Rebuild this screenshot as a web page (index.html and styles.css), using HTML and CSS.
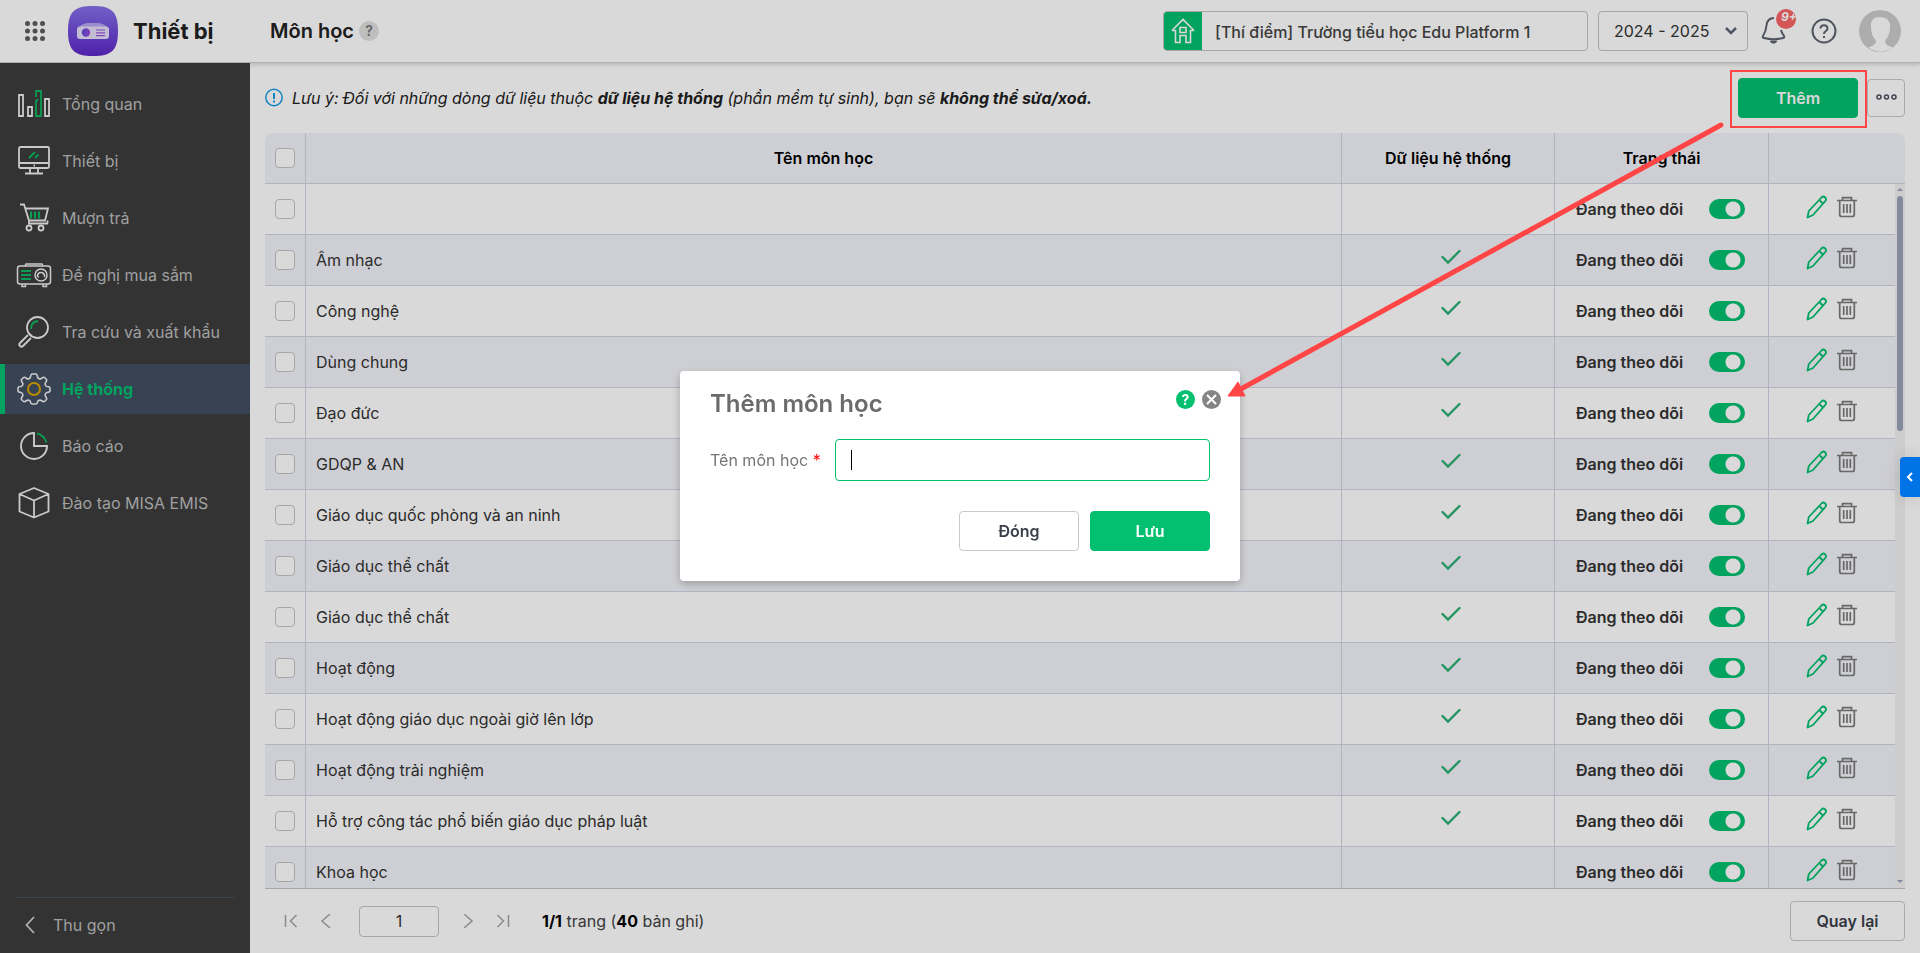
FILE: index.html
```html
<!DOCTYPE html>
<html lang="vi">
<head>
    <meta charset="utf-8">
    <title>Môn học</title>
    <link rel="stylesheet" href="styles.css">
</head>
<body>

<!-- shared icons -->
<svg class="sprite" aria-hidden="true">
    <symbol id="i-check" viewBox="0 0 20 16"><path d="M1.500 8l5.500 5.500L18.500 2" fill="none" stroke="#2bb074" stroke-width="2.400" stroke-linecap="round"/></symbol>
    <symbol id="i-edit" viewBox="0 0 22 24"><path d="M1.500 22.500l1.300-6.500L15.500 2.500c1.200-1.200 2.700-1 3.700 0s1 2.500 0 3.700L7 20z M13.300 5l3.500 3.500" fill="none" stroke="#03bf70" stroke-width="1.800" stroke-linejoin="round"/></symbol>
    <symbol id="i-trash" viewBox="0 0 20 22"><path d="M0 4.500h20M5.500 4V1.700h9V4M2.700 4.500v14c0 1.200.8 2 2 2h10.600c1.200 0 2-.8 2-2v-14M6.700 8v9M10 8v9M13.300 8v9" fill="none" stroke="#7b7b7b" stroke-width="1.700"/></symbol>
</svg>

<header class="topbar">
    <button class="icon-btn" aria-label="Ứng dụng">
        <svg width="20" height="20" viewBox="0 0 20 20" fill="#5f5f5f"><circle cx="2.500" cy="2.500" r="2.500"/><circle cx="10" cy="2.500" r="2.500"/><circle cx="17.500" cy="2.500" r="2.500"/><circle cx="2.500" cy="10" r="2.500"/><circle cx="10" cy="10" r="2.500"/><circle cx="17.500" cy="10" r="2.500"/><circle cx="2.500" cy="17.500" r="2.500"/><circle cx="10" cy="17.500" r="2.500"/><circle cx="17.500" cy="17.500" r="2.500"/></svg>
    </button>
    <svg class="logo" width="50" height="50" viewBox="0 0 50 50">
        <defs>
            <linearGradient id="lg" x1="0" y1="0" x2="0" y2="1"><stop offset="0" stop-color="#8672ea"/><stop offset="1" stop-color="#5d27c8"/></linearGradient>
            <linearGradient id="lens" x1="0" y1="0" x2="1" y2="0"><stop offset="0" stop-color="#5a48e0"/><stop offset="1" stop-color="#a44be0"/></linearGradient>
        </defs>
        <path d="M25 0C43 0 50 5 50 25S43 50 25 50 0 45 0 25 7 0 25 0z" fill="url(#lg)"/>
        <path d="M11 21c3-3 6-4 9-4h10c3 0 6 1 9 4z" fill="#b4a6f0"/>
        <rect x="9" y="20.500" width="32" height="12.500" rx="3" fill="#e6defa"/>
        <circle cx="18" cy="26.500" r="4.200" fill="url(#lens)"/>
        <path d="M28 24h9M28 26.800h9M28 29.600h9" stroke="#9a55dd" stroke-width="1.200"/>
    </svg>
    <span class="app-name">Thiết bị</span>
    <h1 class="page-title">Môn học</h1>
    <button class="hint" aria-label="Trợ giúp">?</button>
    <div class="topbar-right">
        <div class="school">
            <span class="school-icon">
                <svg width="26" height="26" viewBox="0 0 26 26" fill="none" stroke="#fff" stroke-width="1.600"><path d="M2 12.500L13 1.500l11 11M2 12.500h3.500V24.500H10v-7h6v7h4.500v-12H24M10 9.500h6v5h-6z"/></svg>
            </span>
            <span class="school-name">[Thí điểm] Trường tiểu học Edu Platform 1</span>
        </div>
        <select class="year" aria-label="Năm học"><option>2024 - 2025</option></select>
        <button class="icon-btn bell" aria-label="Thông báo">
            <svg width="26" height="28" viewBox="0 0 26 28" fill="none" stroke="#5e6470" stroke-width="2" stroke-linejoin="round"><path d="M13 2c-5 0-7 3-7.500 7.500C5 15 4 17 2 20c-.6 1.200 0 1.800 1 2 6 1.500 13 1.500 19 0 1-.2 1.600-.8 1-2-1.500-2-2.500-3.500-3-6"/><path d="M10 25.500h5l-1.500 1h-2z" fill="#5e6470"/></svg>
            <span class="badge">9+</span>
        </button>
        <button class="icon-btn" aria-label="Hỗ trợ">
            <svg width="26" height="26" viewBox="0 0 26 26" fill="none" stroke="#5e6470" stroke-width="2"><circle cx="13" cy="13" r="11.500"/><path d="M9.500 10.500c0-4.500 7-4.500 7 0 0 2.500-3.500 2.500-3.500 5.500M13 18v2"/></svg>
        </button>
        <svg class="avatar" width="42" height="42" viewBox="0 0 42 42"><circle cx="21" cy="21" r="21" fill="#ccc"/><path d="M21 7c-7 0-9.500 4-9 10 .2 6 1.500 10 4.500 13 1 3-.5 5.500-7 7.500 7 5.500 17 5.500 24 0-6.500-2-8-4.500-7-7.500 3-3 4.300-7 4.500-13C31.500 11 28 7 21 7z" fill="#fff"/></svg>
    </div>
</header>

<div class="layout">
    <nav class="sidebar">
        <a class="nav-item" href="#">
            <svg width="36" height="36" viewBox="0 0 36 36" fill="none" stroke="#eee" stroke-width="1.800"><path d="M3 9h4v21H3zM12 21h4v9h-4zM29 13h4v17h-4z"/><path d="M20 11V5h5v25h-5V15l2-2" stroke="#0db561"/></svg>
            Tổng quan</a>
        <a class="nav-item" href="#">
            <svg width="36" height="36" viewBox="0 0 36 36" fill="none" stroke="#eee" stroke-width="1.800"><rect x="3" y="4" width="30" height="21" rx="1.500"/><path d="M3 20h30M14 25v5M22 25v5M9 30.500h18M17.500 22.500h1.500"/><path d="M13 15l6-6M19 15l3.500-3.500" stroke="#0db561" stroke-width="2"/></svg>
            Thiết bị</a>
        <a class="nav-item" href="#">
            <svg width="36" height="36" viewBox="0 0 36 36" fill="none" stroke="#eee" stroke-width="1.800"><path d="M4 4.500h4l5 16h16l3-12H9.500M13 20.500v3h19M31.500 20.500v3"/><circle cx="13" cy="28" r="2.500"/><circle cx="25" cy="28" r="2.500"/><path d="M15 11.500v7M19 11.500v7M23 11.500v7" stroke="#0db561" stroke-width="2.200"/></svg>
            Mượn trả</a>
        <a class="nav-item" href="#">
            <svg width="36" height="36" viewBox="0 0 36 36" fill="none" stroke="#eee" stroke-width="1.500"><rect x="1.500" y="9" width="33" height="18" rx="2.500"/><path d="M9 9l1-2h16l1 2M6 27v2.500h3.500V27M27 27v2.500h3.500V27"/><circle cx="25" cy="18" r="6"/><path d="M21.500 20c-1-6 8-6 7 0M22 20h1"/><path d="M5 14h10M5 18h10M5 22h10" stroke="#0db561" stroke-width="1.800"/></svg>
            Đề nghị mua sắm</a>
        <a class="nav-item" href="#">
            <svg width="36" height="36" viewBox="0 0 36 36" fill="none" stroke="#eee" stroke-width="1.800"><circle cx="21.500" cy="13.500" r="10.500"/><path d="M12 21l-8 8c-2 2 1 5 3 3l8-8M13.500 20l2 2"/><path d="M15 15c0-5 2-7.500 7-8" stroke="#0db561"/></svg>
            Tra cứu và xuất khẩu</a>
        <a class="nav-item active" href="#">
            <svg width="36" height="36" viewBox="0 0 36 36" fill="none" stroke="#eee" stroke-width="1.600" stroke-linejoin="round"><path d="M14.500 6c.3-2 .8-3 1.500-3h4c.7 0 1.200 1 1.500 3 .3 1.500 2.500 2.400 3.800 1.500 1.600-1.200 2.600-1.500 3.200-1l2 2c.5.600.2 1.600-1 3.200-.9 1.300 0 3.500 1.500 3.800 2 .3 3 .8 3 1.500v3c0 .7-1 1.200-3 1.500-1.500.3-2.400 2.500-1.500 3.800 1.200 1.600 1.500 2.600 1 3.200l-2 2c-.6.500-1.600.2-3.200-1-1.300-.9-3.500 0-3.800 1.500-.3 2-.8 2-1.500 2h-4c-.7 0-1.200 0-1.500-2-.3-1.500-2.500-2.400-3.800-1.500-1.600 1.200-2.600 1.500-3.200 1l-2-2c-.5-.6-.2-1.600 1-3.200.9-1.300 0-3.500-1.500-3.800-2-.3-3-.8-3-1.500v-3c0-.7 1-1.200 3-1.500 1.500-.3 2.400-2.500 1.500-3.800-1.200-1.600-1.500-2.600-1-3.200l2-2c.6-.5 1.600-.2 3.200 1C12 8.400 14.200 7.500 14.500 6z"/><circle cx="18" cy="18" r="6" stroke="#dba400" stroke-width="2"/></svg>
            Hệ thống</a>
        <a class="nav-item" href="#">
            <svg width="36" height="36" viewBox="0 0 36 36" fill="none" stroke="#eee" stroke-width="1.900"><path d="M18 5a13 13 0 1 0 13 13H18z"/><path d="M21 5.500c5 1 8 4.500 9.500 9" stroke="#0db561"/></svg>
            Báo cáo</a>
        <a class="nav-item" href="#">
            <svg width="36" height="36" viewBox="0 0 36 36" fill="none" stroke="#eee" stroke-width="1.800" stroke-linejoin="round"><path d="M18 3l14.500 6v17.500L18 32.500l-14.500-6V9zM3.500 9L18 15.500 32.500 9M18 15.500v17"/></svg>
            Đào tạo MISA EMIS</a>
        <button class="collapse">
            <svg width="10" height="18" viewBox="0 0 10 18" fill="none" stroke="#d0d0d0" stroke-width="1.800"><path d="M9 1L1.500 9 9 17"/></svg>
            Thu gọn</button>
    </nav>

    <main class="content">
        <div class="toolbar">
            <svg width="18" height="19" viewBox="0 0 18 19" fill="none" stroke="#1a9be6" stroke-width="1.500"><circle cx="9" cy="9.500" r="8.200"/><path d="M9 5v6M9 12.500v2" stroke-width="2"/></svg>
            <p class="note">Lưu ý: Đối với những dòng dữ liệu thuộc <b>dữ liệu hệ thống</b> (phần mềm tự sinh), bạn sẽ <b>không thể sửa/xoá.</b></p>
            <button class="btn primary">Thêm</button>
            <button class="more" aria-label="Thêm tùy chọn">
                <svg width="21" height="6" viewBox="0 0 21 6" fill="none" stroke="#4a4f5e" stroke-width="1.500"><circle cx="3" cy="3" r="2"/><circle cx="10.500" cy="3" r="2"/><circle cx="18" cy="3" r="2"/></svg>
            </button>
        </div>

        <div class="grid">
            <table>
                <colgroup><col class="c-check"><col><col class="c-system"><col class="c-status"><col class="c-actions"></colgroup>
                <thead>
                    <tr>
                        <th class="check"><input type="checkbox" aria-label="Chọn tất cả"></th>
                        <th>Tên môn học</th>
                        <th>Dữ liệu hệ thống</th>
                        <th>Trạng thái</th>
                        <th></th>
                    </tr>
                </thead>
                <tbody id="rows"></tbody>
            </table>
            <div class="scrollbar"><i class="up"></i><i class="thumb"></i><i class="down"></i></div>
        </div>

        <footer class="pager">
            <button class="icon-btn" aria-label="Trang đầu"><svg width="14" height="14" viewBox="0 0 14 14"><path d="M1.500 1v12M12.500 1l-6 6 6 6"/></svg></button>
            <button class="icon-btn" aria-label="Trang trước"><svg width="14" height="14" viewBox="0 0 14 14"><path d="M11 0L3 7l8 7"/></svg></button>
            <input class="page-no" type="text" value="1" aria-label="Trang">
            <button class="icon-btn" aria-label="Trang sau"><svg width="14" height="14" viewBox="0 0 14 14"><path d="M3 0l8 7-8 7"/></svg></button>
            <button class="icon-btn" aria-label="Trang cuối"><svg width="14" height="14" viewBox="0 0 14 14"><path d="M12.500 1v12M1.500 1l6 6-6 6"/></svg></button>
            <span class="total"><b>1/1</b> trang (<b>40</b> bản ghi)</span>
            <button class="btn back">Quay lại</button>
        </footer>
    </main>
</div>

<button class="side-tab" aria-label="Mở rộng"><svg width="8" height="10" viewBox="0 0 8 10" fill="none" stroke="#fff" stroke-width="2"><path d="M6 1L2 5l4 4"/></svg></button>

<div class="backdrop">
    <form class="modal" role="dialog" aria-labelledby="modalTitle">
        <div class="modal-head">
            <h2 id="modalTitle">Thêm môn học</h2>
            <button type="button" class="round help" aria-label="Trợ giúp">?</button>
            <button type="button" class="round close" aria-label="Đóng"><svg width="11" height="11" viewBox="0 0 11 11" stroke="#fff" stroke-width="2"><path d="M1 1l9 9M10 1l-9 9"/></svg></button>
        </div>
        <div class="field">
            <label for="subject">Tên môn học <span class="required">*</span></label>
            <div class="field-box">
                <input id="subject" type="text">
                <span class="caret"></span>
            </div>
        </div>
        <div class="modal-foot">
            <button type="button" class="btn">Đóng</button>
            <button type="button" class="btn primary">Lưu</button>
        </div>
    </form>
</div>

<div class="callout"></div>
<svg class="arrow" width="500" height="280" viewBox="0 0 500 280"><path d="M496 5L14 270" stroke="#ff4545" stroke-width="5" stroke-linecap="round"/><path d="M3 276l10-14 7 14z" fill="#ff4545" stroke="#ff4545"/></svg>

<script>
    var subjects = [
        ['', false],
        ['Âm nhạc', true],
        ['Công nghệ', true],
        ['Dùng chung', true],
        ['Đạo đức', true],
        ['GDQP & AN', true],
        ['Giáo dục quốc phòng và an ninh', true],
        ['Giáo dục thể chất', true],
        ['Giáo dục thể chất', true],
        ['Hoạt động', true],
        ['Hoạt động giáo dục ngoài giờ lên lớp', true],
        ['Hoạt động trải nghiệm', true],
        ['Hỗ trợ công tác phổ biến giáo dục pháp luật', true],
        ['Khoa học', false]
    ];

    document.getElementById('rows').innerHTML = subjects.map(function (s, i) {
        return '<tr>' +
            '<td class="check"><input type="checkbox" aria-label="Chọn dòng ' + (i + 1) + '"></td>' +
            '<td class="name">' + s[0].replace('&', '&amp;') + '</td>' +
            '<td class="system">' + (s[1] ? '<svg width="20" height="16"><use href="#i-check"/></svg>' : '') + '</td>' +
            '<td><label class="status">Đang theo dõi <input type="checkbox" class="switch" checked></label></td>' +
            '<td><div class="actions">' +
            '<button class="icon-btn" aria-label="Sửa"><svg width="22" height="24"><use href="#i-edit"/></svg></button>' +
            '<button class="icon-btn" aria-label="Xóa"><svg width="20" height="22"><use href="#i-trash"/></svg></button>' +
            '</div></td></tr>';
    }).join('');
</script>

</body>
</html>
```

FILE: styles.css
```css
* {
    box-sizing: border-box;
}

body {
    margin: 0;
    height: 100vh;
    display: flex;
    flex-direction: column;
    overflow: hidden;
    font-family: Inter, "Liberation Sans", sans-serif;
    font-size: 16px;
    color: #333;
    background-color: #fff;
}

button, input, select {
    font: inherit;
    color: inherit;
}

button {
    cursor: pointer;
}

.sprite {
    display: none;
}

.icon-btn {
    display: flex;
    padding: 0;
    border: none;
    background: none;
}

/* top bar */
.topbar {
    display: flex;
    align-items: center;
    height: 63px;
    padding: 0 19px 0 25px;
    border-bottom: 1px solid #d0d0d4;
    box-shadow: 0 1px 5px rgba(0, 0, 0, 0.2);
    color: #212121;
}

.logo {
    margin-left: 23px;
}

.app-name {
    width: 137px;
    margin-left: 15px;
    font-size: 22px;
    font-weight: 700;
}

.page-title {
    margin: 0;
    font-size: 20px;
    font-weight: 600;
}

.hint {
    width: 20px;
    height: 20px;
    margin-left: 5px;
    padding: 0;
    border: none;
    border-radius: 50%;
    background-color: #e0e0e0;
    color: #757575;
    font-size: 14px;
    font-weight: 600;
    line-height: 20px;
}

.topbar-right {
    display: flex;
    align-items: center;
    margin-left: auto;
}

.school {
    display: flex;
    width: 425px;
    height: 40px;
    border: 1px solid #c4c4c4;
    border-radius: 4px;
    overflow: hidden;
}

.school-icon {
    display: flex;
    align-items: center;
    justify-content: center;
    width: 38px;
    background-color: #03bf70;
}

.school-name {
    padding-left: 13px;
    font-weight: 500;
    line-height: 40px;
    color: #444;
}

.year {
    width: 150px;
    height: 40px;
    margin: 0 13px 0 10px;
    padding: 0 15px;
    border: 1px solid #c4c4c4;
    border-radius: 4px;
    appearance: none;
    color: #333;
    background: url("data:image/svg+xml,%3Csvg xmlns='http://www.w3.org/2000/svg' width='14' height='10' fill='none' stroke='%235e6478' stroke-width='2.500'%3E%3Cpath d='M2 2l5 5 5-5'/%3E%3C/svg%3E") no-repeat right 9px center;
}

.bell {
    position: relative;
    margin-right: 24px;
    padding-bottom: 3px;
}

.badge {
    position: absolute;
    top: -7px;
    left: 15px;
    width: 20px;
    height: 20px;
    padding-left: 5px;
    border-radius: 50%;
    overflow: hidden;
    background-color: #f86464;
    color: #fff;
    font-size: 12px;
    font-style: italic;
    font-weight: 700;
    line-height: 16px;
    text-align: left;
}

.avatar {
    margin-left: 22px;
}

.layout {
    display: flex;
    flex: 1;
    min-height: 0;
}

/* sidebar */
.sidebar {
    display: flex;
    flex-direction: column;
    gap: 7px;
    width: 250px;
    padding-top: 16px;
    background-color: #3c3c3c;
    z-index: 1;
}

.nav-item {
    display: flex;
    align-items: center;
    gap: 10px;
    height: 50px;
    padding-left: 16px;
    color: #bdbdbd;
    text-decoration: none;
}

.nav-item.active {
    padding-left: 11px;
    border-left: 5px solid #03bf70;
    background-color: #414e61;
    color: #03bf70;
    font-weight: 700;
}

.collapse {
    display: flex;
    align-items: center;
    gap: 18px;
    height: 56px;
    margin: auto 15px 0;
    padding: 0 0 2px 10px;
    border: none;
    border-top: 1px solid #45525c;
    background: none;
    color: #bdbdbd;
}

/* content */
.content {
    display: flex;
    flex-direction: column;
    flex: 1;
    min-width: 0;
    padding: 0 15px;
}

.toolbar {
    display: flex;
    align-items: center;
    height: 70px;
    padding-bottom: 1px;
}

.note {
    flex: 1;
    margin: 0 0 0 9px;
    font-style: italic;
    color: #212121;
}

.btn {
    width: 120px;
    height: 40px;
    padding: 0;
    border: 1px solid #c9c9c9;
    border-radius: 4px;
    background-color: #fff;
    font-weight: 600;
    color: #3b3f4c;
}

.btn.primary {
    border-color: #03bf70;
    background-color: #03bf70;
    color: #fff;
}

.more {
    display: flex;
    justify-content: center;
    width: 38px;
    height: 38px;
    margin-left: 9px;
    padding: 14px 0 0;
    border: 1px solid #c9c9c9;
    border-radius: 4px;
    background-color: #fff;
}

.grid {
    position: relative;
    flex: 1;
    min-height: 0;
    overflow: hidden;
    border-bottom: 1px solid #c4c4c4;
    border-radius: 8px 8px 0 0;
}

table {
    width: 100%;
    table-layout: fixed;
    border-collapse: separate;
    border-spacing: 0;
}

.c-check { width: 41px; }
.c-system { width: 213px; }
.c-status { width: 214px; }
.c-actions { width: 136px; }

th, td {
    height: 51px;
    padding: 0;
    border-right: 1px solid #d3d4e4;
    border-bottom: 1px solid #d3d4e4;
}

th:last-child, td:last-child {
    border-right: none;
}

th {
    background-color: #f3f4f9;
    font-weight: 600;
    color: #000;
}

tbody tr:nth-child(even) {
    background-color: #f3f4f9;
}

.check {
    padding-bottom: 1px;
    text-align: center;
}

.name {
    padding-left: 10px;
}

.system {
    padding: 0 0 2px 6px;
    text-align: center;
}

input[type="checkbox"] {
    display: block;
    width: 20px;
    height: 20px;
    margin: 0 auto;
    border: 1px solid #c4c4c4;
    border-radius: 4px;
    background-color: #fff;
    appearance: none;
}

.status {
    display: flex;
    align-items: center;
    justify-content: space-between;
    padding: 0 23px 0 21px;
    font-weight: 600;
}

.status .switch {
    width: 36px;
    height: 20px;
    margin: 0;
    border: none;
    border-radius: 10px;
    background: radial-gradient(circle at 24px 10px, #fff 7px, #03bf70 8px);
}

.actions {
    display: flex;
    align-items: center;
    justify-content: center;
    gap: 9px;
    padding: 0 12px 4px 0;
}

.scrollbar {
    position: absolute;
    top: 51px;
    right: 0;
    bottom: 0;
    display: flex;
    flex-direction: column;
    align-items: center;
    width: 10px;
    background-color: #f1f1f1;
}

.up, .down {
    border: 3px solid transparent;
}

.up {
    margin: 1px 0 5px;
    border-bottom-color: #9aa3b8;
}

.down {
    margin: auto 0 2px;
    border-top-color: #9aa3b8;
}

.thumb {
    width: 6px;
    height: 235px;
    border-radius: 3px;
    background-color: #9aa3b8;
}

/* paging */
.pager {
    display: flex;
    align-items: center;
    height: 64px;
    padding-left: 19px;
}

.pager svg {
    fill: none;
    stroke: #a4a4a8;
    stroke-width: 1.5;
}

.pager .icon-btn + .icon-btn {
    margin-left: 21px;
}

.page-no {
    width: 80px;
    height: 31px;
    margin: 0 22px 0 26px;
    border: 1px solid #c4c4c4;
    border-radius: 4px;
    text-align: center;
}

.total {
    margin-left: 32px;
    color: #424242;
}

.total b {
    color: #000;
}

.back {
    width: 115px;
    margin-left: auto;
}

.side-tab {
    position: fixed;
    top: 457px;
    right: 0;
    z-index: 3;
    display: flex;
    align-items: center;
    justify-content: center;
    width: 20px;
    height: 40px;
    padding: 0;
    border: none;
    border-radius: 4px 0 0 4px;
    background-color: #0073e6;
    box-shadow: 0 0 20px rgba(0, 0, 0, 0.15);
}

/* dialog */
.backdrop {
    position: fixed;
    inset: 0;
    z-index: 2;
    display: flex;
    align-items: center;
    justify-content: center;
    padding-bottom: 1px;
    background-color: rgba(0, 0, 0, 0.15);
}

.modal {
    width: 560px;
    padding: 18px 30px 30px;
    border-radius: 4px;
    background-color: #fff;
    box-shadow: 0 3px 8px rgba(0, 0, 0, 0.25);
}

.modal-head {
    display: flex;
    height: 50px;
    margin-right: -11px;
}

.modal-head h2 {
    flex: 1;
    margin: 0;
    font-size: 24px;
    font-weight: 600;
    line-height: 30px;
    color: #6b6b6b;
}

.round {
    display: flex;
    align-items: center;
    justify-content: center;
    width: 19px;
    height: 19px;
    margin: 1px 0 0 7px;
    padding: 0;
    border: none;
    border-radius: 50%;
    color: #fff;
    font-size: 14px;
    font-weight: 700;
}

.help { background-color: #03bf70; }
.close { background-color: #858585; }

.field {
    display: flex;
    align-items: center;
}

.field label {
    width: 125px;
    color: #757575;
}

.required {
    color: #f00;
}

.field-box {
    position: relative;
    flex: 1;
}

.field-box input {
    display: block;
    width: 100%;
    height: 42px;
    padding: 0 15px;
    border: 1px solid #03bf70;
    border-radius: 4px;
    outline: none;
}

.caret {
    position: absolute;
    top: 11px;
    left: 16px;
    width: 1px;
    height: 20px;
    background-color: #000;
}

.modal-foot {
    display: flex;
    justify-content: flex-end;
    gap: 11px;
    margin-top: 30px;
}

/* highlight on the add button */
.callout {
    position: fixed;
    top: 70px;
    right: 53px;
    z-index: 4;
    width: 137px;
    height: 58px;
    border: 2px solid #ff4545;
}

.arrow {
    position: fixed;
    top: 120px;
    right: 195px;
    z-index: 4;
}
```
